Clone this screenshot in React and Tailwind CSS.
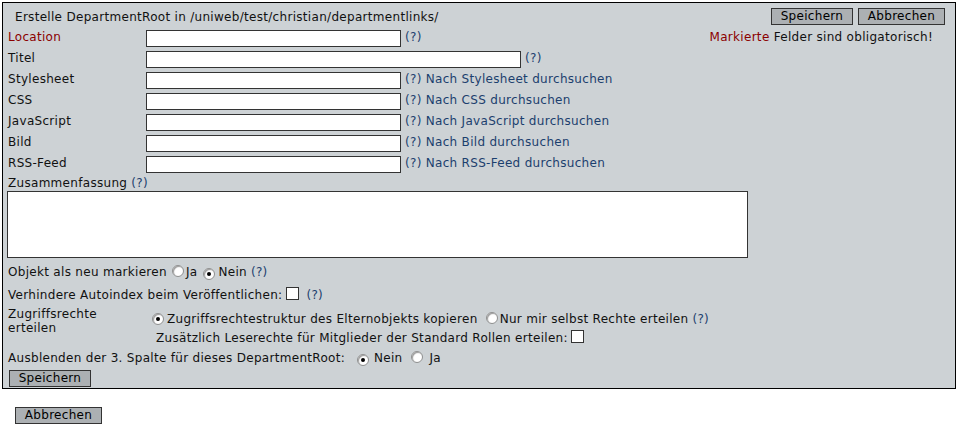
import React from 'react';

function Help() {
  return <span className="text-[#1c3f6e]">(?)</span>;
}

function Radio({ checked }) {
  return (
    <span className="inline-flex w-[12px] h-[12px] shrink-0 items-center justify-center rounded-full border border-[#8e8f8f] bg-white shadow-[inset_1px_1px_1px_#9a9a9a]">
      {checked && <span className="w-[4px] h-[4px] rounded-full bg-black" />}
    </span>
  );
}

function Check() {
  return <span className="inline-block w-[13px] h-[13px] shrink-0 border border-[#333] bg-white" />;
}

function Btn({ children, className = '' }) {
  return (
    <button className={'h-[17px] border border-[#333] bg-[#acb0b3] text-[12px] leading-[15px] tracking-[0.3px] text-black ' + className}>
      {children}
    </button>
  );
}

function Field({ label, red, wide, search, right }) {
  return (
    <div className="flex h-[21px] items-center">
      <div className={'w-[143px] pl-[5px] pb-[3px] ' + (red ? 'text-[#8b0000]' : '')}>{label}</div>
      <input className={'h-[17px] border border-[#333] bg-white ' + (wide ? 'w-[375px]' : 'w-[255px]')} />
      <span className="ml-[4px] pb-[3px] text-[#1c3f6e]">(?){search && ' Nach ' + search + ' durchsuchen'}</span>
      {right}
    </div>
  );
}

export default function App() {
  return (
    <div className="bg-white h-[425px] pt-[2px] pl-[2px] text-[12px] leading-[14px] tracking-[0.3px] text-[#111]" style={{ fontFamily: '"DejaVu Sans", Verdana, sans-serif' }}>
      <div className="w-[954px] h-[387px] border border-black bg-[#cdd2d5]">
        <div className="flex h-[25px] justify-between">
          <div className="pl-[12px] pt-[7px]">Erstelle DepartmentRoot in /uniweb/test/christian/departmentlinks/</div>
          <div className="flex gap-[5px] pt-[5px] pr-[10px]">
            <Btn className="w-[82px]">Speichern</Btn>
            <Btn className="w-[87px]">Abbrechen</Btn>
          </div>
        </div>
        <Field
          label="Location"
          red
          right={
            <span className="ml-auto mr-[22px] pb-[3px]">
              <span className="text-[#8b0000]">Markierte</span> Felder sind obligatorisch!
            </span>
          }
        />
        <Field label="Titel" wide />
        <Field label="Stylesheet" search="Stylesheet" />
        <Field label="CSS" search="CSS" />
        <Field label="JavaScript" search="JavaScript" />
        <Field label="Bild" search="Bild" />
        <Field label="RSS-Feed" search="RSS-Feed" />

        <div className="h-[16px] pl-[5px] pt-[1px]">
          Zusammenfassung <Help />
        </div>
        <textarea className="ml-[4px] block w-[741px] h-[67px] resize-none border border-[#333] bg-white" />

        <div className="flex h-[28px] items-center pl-[5px]">
          <span>Objekt als neu markieren</span>
          <span className="ml-[5px]"><Radio /></span>
          <span className="ml-[2px]">Ja</span>
          <span className="ml-[6px]"><Radio checked /></span>
          <span className="ml-[3px]">Nein</span>
          <span className="ml-[4px]"><Help /></span>
        </div>
        <div className="flex h-[18px] items-center pl-[5px]">
          <span>Verhindere Autoindex beim Veröffentlichen:</span>
          <span className="ml-[4px]"><Check /></span>
          <span className="ml-[7px]"><Help /></span>
        </div>

        <div className="flex h-[45px]">
          <div className="w-[149px] pl-[5px] pt-[3px]">
            Zugriffsrechte
            <br />
            erteilen
          </div>
          <div className="pt-[6px]">
            <div className="flex h-[18px] items-center">
              <Radio checked />
              <span className="ml-[3px]">Zugriffsrechtestruktur des Elternobjekts kopieren</span>
              <span className="ml-[8px]"><Radio /></span>
              <span className="ml-[2px]">Nur mir selbst Rechte erteilen</span>
              <span className="ml-[4px]"><Help /></span>
            </div>
            <div className="flex h-[19px] items-center pl-[4px]">
              <span>Zusätzlich Leserechte für Mitglieder der Standard Rollen erteilen:</span>
              <span className="ml-[3px]"><Check /></span>
            </div>
          </div>
        </div>

        <div className="flex h-[18px] items-center pl-[5px]">
          <span>Ausblenden der 3. Spalte für dieses DepartmentRoot:</span>
          <span className="ml-[12px]"><Radio checked /></span>
          <span className="ml-[5px]">Nein</span>
          <span className="ml-[8px]"><Radio /></span>
          <span className="ml-[7px]">Ja</span>
        </div>
        <div className="pl-[6px] pt-[3px]">
          <Btn className="w-[82px]">Speichern</Btn>
        </div>
      </div>
      <div className="pl-[13px] pt-[18px]">
        <Btn className="w-[87px]">Abbrechen</Btn>
      </div>
    </div>
  );
}
